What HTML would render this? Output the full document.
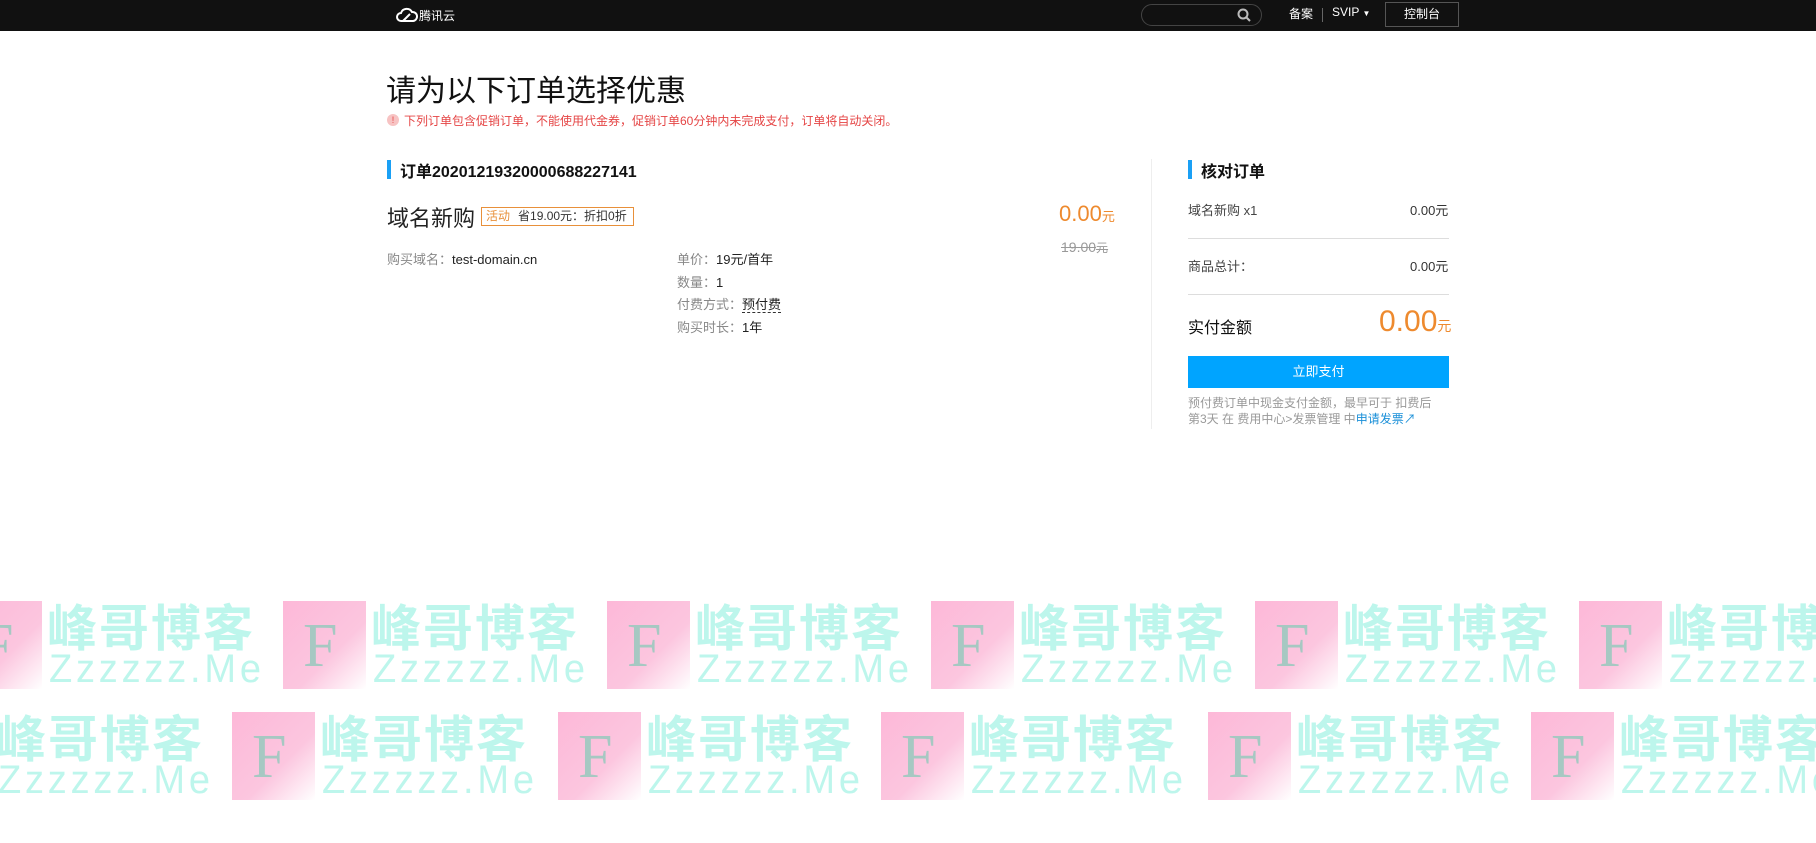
<!DOCTYPE html>
<html><head><meta charset="utf-8"><style>
*{margin:0;padding:0;box-sizing:border-box}
body{width:1816px;height:843px;overflow:hidden;background:#fff;position:relative;font-family:"Liberation Sans","Noto Sans CJK SC",sans-serif;color:#333}
.a{position:absolute;white-space:nowrap}
.hdr{position:absolute;left:0;top:0;width:1816px;height:31px;background:#111}
.g{color:#888;font-size:13px}
.v{color:#222;font-size:13px}
.tile{position:absolute;width:300px;height:90px}
.pk{position:absolute;left:0;top:0;width:83px;height:88px;background:linear-gradient(135deg,#fdb8d8 0%,#fcc6df 60%,#fff 100%)}
.pk span{position:absolute;left:20px;top:10px;font-family:"Liberation Serif",serif;font-size:62px;color:#a6c8c2}
.cn{position:absolute;left:88px;top:-12px;font-size:50px;font-weight:bold;color:#bdf6ec;letter-spacing:2px;font-family:"Noto Sans CJK SC",sans-serif}
.zz{position:absolute;left:90px;top:47px;font-size:40px;line-height:42px;color:#bdf6ec;letter-spacing:4px;font-family:"Liberation Sans",sans-serif;transform:scaleX(.95);transform-origin:left}
</style></head><body>
<div class="hdr"></div>
<svg class="a" style="left:396px;top:7px" width="22" height="16" viewBox="0 0 22 16"><path d="M5 14a4 4 0 0 1 0-8 6 6 0 0 1 11-1 4.5 4.5 0 0 1 1 9z M7 14l7-7" fill="none" stroke="#fff" stroke-width="2"/></svg>
<div class="a" style="left:419px;top:7px;color:#fff;font-size:12px">腾讯云</div>
<div class="a" style="left:1141px;top:4px;width:121px;height:22px;border:1px solid #444;border-radius:11px"></div>
<svg class="a" style="left:1237px;top:8px" width="14" height="14"><circle cx="6" cy="6" r="4.5" fill="none" stroke="#bbb" stroke-width="2"/><path d="M9 9l4 4" stroke="#bbb" stroke-width="2"/></svg>
<div class="a" style="left:1289px;top:5px;color:#fff;font-size:12px">备案</div>
<div class="a" style="left:1322px;top:8px;width:1px;height:14px;background:#666"></div>
<div class="a" style="left:1332px;top:5px;color:#fff;font-size:12px">SVIP <span style="font-size:8px">▼</span></div>
<div class="a" style="left:1385px;top:2px;width:74px;height:25px;border:1px solid #555;color:#fff;font-size:12px;text-align:center;line-height:23px">控制台</div>

<div class="a" style="left:386px;top:66px;font-size:30px;color:#111">请为以下订单选择优惠</div>
<div class="a" style="left:387px;top:114px;width:12px;height:12px;border-radius:6px;background:#f7c3c3;color:#e54545;font-size:9px;text-align:center;line-height:12px">!</div>
<div class="a" style="left:404px;top:112px;font-size:12px;color:#e54545">下列订单包含促销订单，不能使用代金券，促销订单60分钟内未完成支付，订单将自动关闭。</div>

<div class="a" style="left:387px;top:160px;width:4px;height:19px;background:#1aa0f5"></div>
<div class="a" style="left:400px;top:158px;font-size:16px;font-weight:bold;color:#111">订单20201219320000688227141</div>
<div class="a" style="left:387px;top:201px;font-size:22px;color:#222">域名新购</div>
<div class="a" style="left:481px;top:207px;width:153px;height:19px;border:1px solid #e8903a;font-size:12px;line-height:17px"><span style="color:#e8903a;padding:0 4px">活动</span><span style="color:#333;padding-left:4px">省19.00元：折扣0折</span></div>
<div class="a" style="left:1059px;top:201px;font-size:22px;color:#ee8a2e">0.00<span style="font-size:13px">元</span></div>
<div class="a" style="left:1061px;top:239px;font-size:14px;color:#999;text-decoration:line-through">19.00<span style="font-size:12px">元</span></div>
<div class="a g" style="left:387px;top:249px">购买域名：<span class="v">test-domain.cn</span></div>
<div class="a g" style="left:677px;top:249px">单价：<span class="v">19元/首年</span></div>
<div class="a g" style="left:677px;top:272px">数量：<span class="v">1</span></div>
<div class="a g" style="left:677px;top:294px">付费方式：<span class="v" style="border-bottom:1px dashed #333">预付费</span></div>
<div class="a g" style="left:677px;top:317px">购买时长：<span class="v">1年</span></div>

<div class="a" style="left:1151px;top:159px;width:1px;height:270px;background:#eee"></div>
<div class="a" style="left:1188px;top:160px;width:4px;height:19px;background:#1aa0f5"></div>
<div class="a" style="left:1201px;top:158px;font-size:16px;font-weight:bold;color:#111">核对订单</div>
<div class="a" style="left:1188px;top:200px;font-size:13px;color:#444">域名新购 x1</div>
<div class="a" style="left:1410px;top:200px;font-size:13px;color:#333">0.00元</div>
<div class="a" style="left:1188px;top:238px;width:261px;height:1px;background:#ddd"></div>
<div class="a" style="left:1188px;top:256px;font-size:13px;color:#444">商品总计：</div>
<div class="a" style="left:1410px;top:256px;font-size:13px;color:#333">0.00元</div>
<div class="a" style="left:1188px;top:294px;width:261px;height:1px;background:#ddd"></div>
<div class="a" style="left:1188px;top:314px;font-size:16px;color:#111">实付金额</div>
<div class="a" style="left:1379px;top:305px;font-size:30px;color:#ee8a2e">0.00<span style="font-size:14px">元</span></div>
<div class="a" style="left:1188px;top:356px;width:261px;height:32px;background:#00a4ff;color:#fff;font-size:13px;text-align:center;line-height:32px">立即支付</div>
<div class="a" style="left:1188px;top:395px;font-size:12px;color:#999;line-height:16px">预付费订单中现金支付金额，最早可于 扣费后<br>第3天 在 费用中心&gt;发票管理 中<span style="color:#1a8fd8">申请发票↗</span></div>

<div class="tile" style="left:-41px;top:601px"><div class="pk"><span>F</span></div><div class="cn">峰哥博客</div><div class="zz">Zzzzzz.Me</div></div>
<div class="tile" style="left:283px;top:601px"><div class="pk"><span>F</span></div><div class="cn">峰哥博客</div><div class="zz">Zzzzzz.Me</div></div>
<div class="tile" style="left:607px;top:601px"><div class="pk"><span>F</span></div><div class="cn">峰哥博客</div><div class="zz">Zzzzzz.Me</div></div>
<div class="tile" style="left:931px;top:601px"><div class="pk"><span>F</span></div><div class="cn">峰哥博客</div><div class="zz">Zzzzzz.Me</div></div>
<div class="tile" style="left:1255px;top:601px"><div class="pk"><span>F</span></div><div class="cn">峰哥博客</div><div class="zz">Zzzzzz.Me</div></div>
<div class="tile" style="left:1579px;top:601px"><div class="pk"><span>F</span></div><div class="cn">峰哥博客</div><div class="zz">Zzzzzz.Me</div></div>
<div class="tile" style="left:-92px;top:712px"><div class="pk"><span>F</span></div><div class="cn">峰哥博客</div><div class="zz">Zzzzzz.Me</div></div>
<div class="tile" style="left:232px;top:712px"><div class="pk"><span>F</span></div><div class="cn">峰哥博客</div><div class="zz">Zzzzzz.Me</div></div>
<div class="tile" style="left:558px;top:712px"><div class="pk"><span>F</span></div><div class="cn">峰哥博客</div><div class="zz">Zzzzzz.Me</div></div>
<div class="tile" style="left:881px;top:712px"><div class="pk"><span>F</span></div><div class="cn">峰哥博客</div><div class="zz">Zzzzzz.Me</div></div>
<div class="tile" style="left:1208px;top:712px"><div class="pk"><span>F</span></div><div class="cn">峰哥博客</div><div class="zz">Zzzzzz.Me</div></div>
<div class="tile" style="left:1531px;top:712px"><div class="pk"><span>F</span></div><div class="cn">峰哥博客</div><div class="zz">Zzzzzz.Me</div></div>
</body></html>
